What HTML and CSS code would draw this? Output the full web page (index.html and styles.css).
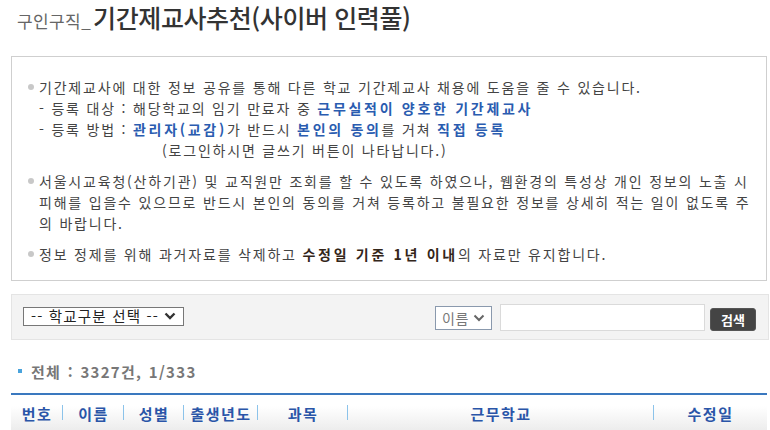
FILE: index.html
```html
<!DOCTYPE html>
<html lang="ko">
<head>
<meta charset="utf-8">
<link rel="stylesheet" href="styles.css">
</head>
<body>
<div class="page">
  <h1 class="title"><span class="title-sub">구인구직_</span><span class="title-main">기간제교사추천(사이버 인력풀)</span></h1>

  <div class="info">
    <div class="para">
      <p class="line bullet">기간제교사에 대한 정보 공유를 통해 다른 학교 기간제교사 채용에 도움을 줄 수 있습니다.</p>
      <p class="line">- 등록 대상 : 해당학교의 임기 만료자 중 <b class="blue">근무실적이 양호한 기간제교사</b></p>
      <p class="line">- 등록 방법 : <b class="blue">관리자(교감)</b>가 반드시 <b class="blue">본인의 동의</b>를 거쳐 <b class="blue">직접 등록</b></p>
      <p class="line indent">(로그인하시면 글쓰기 버튼이 나타납니다.)</p>
    </div>
    <div class="para">
      <p class="line bullet">서울시교육청(산하기관) 및 교직원만 조회를 할 수 있도록 하였으나, 웹환경의 특성상 개인 정보의 노출 시</p>
      <p class="line">피해를 입을수 있으므로 반드시 본인의 동의를 거쳐 등록하고 불필요한 정보를 상세히 적는 일이 없도록 주</p>
      <p class="line">의 바랍니다.</p>
    </div>
    <div class="para">
      <p class="line bullet">정보 정제를 위해 과거자료를 삭제하고 <b class="dark">수정일 기준 1년 이내</b>의 자료만 유지합니다.</p>
    </div>
  </div>

  <div class="search">
    <div class="select school"><span class="school-text">-- 학교구분 선택 --</span><svg class="chev" viewBox="0 0 12 8" width="12" height="8"><path d="M1.5 1.5 L6 6 L10.5 1.5" fill="none" stroke="#333" stroke-width="2.4"/></svg></div>
    <div class="search-right">
      <div class="select field">이름<svg class="chev" viewBox="0 0 12 8" width="12" height="8"><path d="M1.5 1.5 L6 6 L10.5 1.5" fill="none" stroke="#666" stroke-width="2"/></svg></div>
      <div class="input"></div>
      <div class="btn">검색</div>
    </div>
  </div>

  <div class="total"><span class="sq"></span>전체 : 3327건, 1/333</div>

  <div class="thead">
    <div class="th c1">번호</div>
    <div class="th c2">이름</div>
    <div class="th c3">성별</div>
    <div class="th c4">출생년도</div>
    <div class="th c5">과목</div>
    <div class="th c6">근무학교</div>
    <div class="th c7 last">수정일</div>
  </div>
</div>
</body>
</html>
```
FILE: styles.css
```css
html, body {
  margin: 0;
  padding: 0;
  background: #fff;
}
body {
  font-family: "Noto Sans CJK KR", "Noto Sans", sans-serif;
  color: #444;
}
.page {
  padding-left: 11px;
  width: 758px;
}
.title {
  margin: 0;
  padding: 2px 0 0 6px;
  height: 56px;
  box-sizing: border-box;
  font-weight: normal;
  line-height: 30px;
  display: flex;
  align-items: baseline;
}
.title-sub {
  font-size: 17px;
  color: #666;
  letter-spacing: 0.4px;
}
.title-main {
  font-size: 25px;
  color: #333;
  font-weight: 500;
  letter-spacing: -0.4px;
  margin-left: 2px;
}
.info {
  width: 756px;
  box-sizing: border-box;
  border: 1px solid #cfcfcf;
  padding: 20px 0 15px 16px;
}
.para + .para {
  margin-top: 10px;
}
.line {
  margin: 0;
  padding-left: 11px;
  font-size: 14px;
  line-height: 21px;
  letter-spacing: 1.8px;
  white-space: nowrap;
  position: relative;
}
.bullet::before {
  content: "";
  position: absolute;
  left: 0;
  top: 7px;
  width: 6px;
  height: 6px;
  border-radius: 50%;
  background: #c8c8c8;
}
.indent {
  padding-left: 134px;
}
.blue {
  color: #2a5cb0;
  font-weight: bold;
  letter-spacing: 2.7px;
}
.dark {
  color: #33261a;
  font-weight: bold;
  letter-spacing: 2.7px;
}
.search {
  margin-top: 13px;
  height: 46px;
  box-sizing: border-box;
  background: #f3f3f3;
  border: 1px solid #e4e4e4;
  display: flex;
  align-items: center;
  justify-content: space-between;
  padding: 0 12px 0 11px;
}
.select {
  display: flex;
  align-items: center;
  background: #fff;
  box-sizing: border-box;
  font-size: 14px;
  line-height: 16px;
}
.school {
  width: 161px;
  height: 19px;
  border: 1px solid #777;
  color: #222;
  padding: 0 0 0 7px;
  gap: 5px;
  margin-top: -2px;
  font-size: 14.5px;
  letter-spacing: 1.2px;
  white-space: nowrap;
}
.search-right {
  display: flex;
  align-items: center;
}
.field {
  width: 57px;
  height: 24px;
  border: 1px solid #8a99ad;
  color: #777;
  padding-left: 6px;
  gap: 4px;
  margin-top: 2px;
  letter-spacing: 0.5px;
}
.input {
  width: 205px;
  height: 27px;
  box-sizing: border-box;
  border: 1px solid #dadada;
  background: #fff;
  margin-left: 8px;
}
.btn {
  width: 46px;
  height: 23px;
  margin-left: 5px;
  margin-top: 4px;
  background: #444;
  border-radius: 3px;
  border: 1px solid #555;
  box-sizing: border-box;
  color: #fff;
  font-size: 13px;
  font-weight: bold;
  display: flex;
  align-items: center;
  justify-content: center;
}
.total {
  margin-top: 19px;
  height: 24px;
  display: flex;
  align-items: center;
  padding-left: 7px;
  font-size: 15px;
  font-weight: bold;
  color: #777;
  letter-spacing: 1.3px;
  word-spacing: 1px;
}
.sq {
  width: 4px;
  height: 4px;
  background: #49a3dc;
  margin-right: 9px;
}
.thead {
  margin-top: 10px;
  width: 756px;
  border-top: 2px solid #3a78bf;
  border-bottom: 1px solid #d0d0d0;
  height: 40px;
  box-sizing: border-box;
  background: linear-gradient(#ffffff 30%, #ebebeb);
  display: grid;
  grid-template-columns: 52px 61px 60px 74px 90px 306px 113px;
}
.th {
  display: flex;
  align-items: center;
  justify-content: center;
  font-size: 15px;
  font-weight: bold;
  color: #2a55a8;
  letter-spacing: 1.5px;
  position: relative;
}
.th::after {
  content: "";
  position: absolute;
  right: 0;
  top: 10px;
  width: 1px;
  height: 15px;
  background: #8cc3ea;
}
.th.last::after {
  display: none;
}
```
